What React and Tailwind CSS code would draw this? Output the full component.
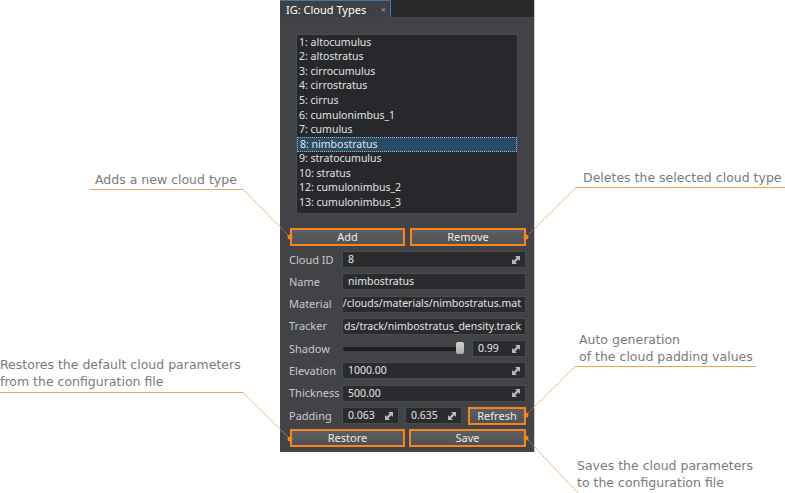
import { useState } from 'react';

const clouds = [
  '1: altocumulus',
  '2: altostratus',
  '3: cirrocumulus',
  '4: cirrostratus',
  '5: cirrus',
  '6: cumulonimbus_1',
  '7: cumulus',
  '8: nimbostratus',
  '9: stratocumulus',
  '10: stratus',
  '12: cumulonimbus_2',
  '13: cumulonimbus_3',
];

const uiFont = { fontFamily: '"Noto Sans", "DejaVu Sans", sans-serif' };
const noteFont = { fontFamily: '"DejaVu Sans", Verdana, sans-serif' };

const ResizeIcon = () => (
  <svg width="8" height="8" viewBox="0 0 8 8" className="shrink-0">
    <polygon points="3,0 8,0 8,5" fill="#b9babc" />
    <polygon points="0,3 0,8 5,8" fill="#b9babc" />
    <line x1="1.5" y1="6.5" x2="6.5" y2="1.5" stroke="#b9babc" strokeWidth="2.4" />
  </svg>
);

const Field = ({ value, spin, className = '' }) => (
  <div className={`h-[17px] min-w-0 flex items-center justify-between bg-[#2a2b2e] border border-[#4a4b4f] pl-[5px] pr-[5px] overflow-hidden ${className}`}>
    <span className="text-[10.5px] text-[#e4e4e4] whitespace-nowrap leading-none pb-px">{value}</span>
    {spin && <ResizeIcon />}
  </div>
);

const PathField = ({ value }) => (
  <div className="flex-1 min-w-0 h-[17px] flex items-center justify-end bg-[#2a2b2e] border border-[#4a4b4f] pr-[4px] overflow-hidden">
    <span className="text-[10.5px] text-[#e4e4e4] whitespace-nowrap leading-none pb-px">{value}</span>
  </div>
);

const Btn = ({ children, className = '' }) => (
  <button className={`h-[18px] shrink-0 flex items-center justify-center border-2 border-[#f5861f] bg-gradient-to-b from-[#5d5e62] to-[#505155] text-[11px] text-[#ececec] leading-none pb-px ${className}`}>
    {children}
  </button>
);

const Row = ({ label, children }) => (
  <div className="flex items-center h-[17px]">
    <span className="w-[53px] shrink-0 text-[11px] text-[#c9c9cb] leading-none whitespace-nowrap pb-px">{label}</span>
    <div className="flex-1 min-w-0 flex items-center">{children}</div>
  </div>
);

const Note = ({ lines, className }) => (
  <div className={`absolute text-[12.5px] leading-[17px] text-[#7a7a7a] whitespace-nowrap ${className}`} style={noteFont}>
    {lines.map((l) => <div key={l}>{l}</div>)}
  </div>
);

export default function App() {
  const [selected, setSelected] = useState(7);

  return (
    <div className="relative w-[785px] h-[493px] bg-white overflow-hidden">
      <div className="ml-[280px] w-[255px] h-[452px] bg-[#424346] border-r border-[#cfcfcf] flex flex-col" style={uiFont}>
        {/* tab bar */}
        <div className="h-[17px] bg-[#28292b] flex">
          <div className="w-[111px] h-full bg-[#3f4043] border-r border-t border-[#3d78a8] flex items-center pl-[6px] pr-[4px] justify-between">
            <span className="text-[11px] text-white leading-none">IG: Cloud Types</span>
            <span className="text-[9px] text-[#9a9a9a] leading-none">×</span>
          </div>
        </div>

        {/* cloud list */}
        <div className="mt-[17px] ml-[16px] w-[222px] h-[180px] bg-[#27282b] border border-[#4b4c50]">
          {clouds.map((c, i) => (
            <div
              key={c}
              onClick={() => setSelected(i)}
              className={`h-[14.6px] flex items-center pl-[2px] pb-[1px] text-[10.5px] leading-none text-[#e2e2e2] ${
                i === selected ? 'bg-[#284b66] border border-dotted border-[#9fb3c4]' : ''
              }`}
            >
              {c}
            </div>
          ))}
        </div>

        <div className="pl-[10px] pr-[8px]">
          <div className="mt-[14px] flex gap-[5px]">
            <Btn className="w-[115px]">Add</Btn>
            <Btn className="w-[116px]">Remove</Btn>
          </div>

          <div className="mt-[5px] flex flex-col gap-[5.3px] -ml-[1px]">
            <Row label="Cloud ID"><Field value="8" spin className="flex-1" /></Row>
            <Row label="Name"><Field value="nimbostratus" className="flex-1" /></Row>
            <Row label="Material"><PathField value="/clouds/materials/nimbostratus.mat" /></Row>
            <Row label="Tracker"><PathField value="ds/track/nimbostratus_density.track" /></Row>
            <Row label="Shadow">
              <div className="w-[123px] shrink-0 relative h-[17px] flex items-center">
                <div className="ml-[1px] w-[118px] h-[4px] rounded-full bg-[#1d1e20]" />
                <div className="absolute left-[114px] top-[2px] w-[8px] h-[12px] rounded-[2px] bg-gradient-to-b from-[#d4d4d4] to-[#a9a9a9]" />
              </div>
              <Field value="0.99" spin className="ml-[7px] w-[54px] shrink-0" />
            </Row>
            <Row label="Elevation"><Field value="1000.00" spin className="flex-1" /></Row>
            <Row label="Thickness"><Field value="500.00" spin className="flex-1" /></Row>
            <Row label="Padding">
              <Field value="0.063" spin className="w-[57px] shrink-0" />
              <Field value="0.635" spin className="ml-[6px] w-[57px] shrink-0" />
              <Btn className="ml-[6px] w-[58px]">Refresh</Btn>
            </Row>
          </div>

          <div className="mt-[5px] flex gap-[4px]">
            <Btn className="w-[115px]">Restore</Btn>
            <Btn className="w-[117px]">Save</Btn>
          </div>
        </div>
      </div>

      {/* callouts */}
      <Note lines={['Adds a new cloud type']} className="left-[95px] top-[171px]" />
      <Note lines={['Deletes the selected cloud type']} className="left-[583px] top-[169px]" />
      <Note lines={['Restores the default cloud parameters', 'from the configuration file']} className="left-0 top-[356px]" />
      <Note lines={['Auto generation', 'of the cloud padding values']} className="left-[579px] top-[331px]" />
      <Note lines={['Saves the cloud parameters', 'to the configuration file']} className="left-[577px] top-[457px]" />

      <svg className="absolute inset-0 pointer-events-none" width="785" height="493">
        <g stroke="#f5a050" strokeWidth="1" fill="none">
          <line x1="90" y1="189.5" x2="243" y2="189.5" />
          <line x1="576" y1="187.5" x2="785" y2="187.5" />
          <line x1="0" y1="392.5" x2="243" y2="392.5" />
          <line x1="575" y1="366.5" x2="756" y2="366.5" />
        </g>
        <g stroke="#f58a2a" strokeWidth="1" strokeDasharray="1.5 1" fill="none">
          <line x1="243" y1="189.5" x2="290" y2="237" />
          <line x1="576" y1="187.5" x2="526" y2="237" />
          <line x1="243" y1="392.5" x2="290" y2="439" />
          <line x1="575" y1="366.5" x2="526" y2="415" />
          <line x1="526" y1="438" x2="578" y2="493" />
        </g>
        <g fill="#f5861f">
          <circle cx="290" cy="237" r="2.5" />
          <circle cx="526" cy="237" r="2.5" />
          <circle cx="290" cy="439" r="2.5" />
          <circle cx="526" cy="415" r="2.5" />
          <circle cx="526" cy="438" r="2.5" />
        </g>
      </svg>
    </div>
  );
}
